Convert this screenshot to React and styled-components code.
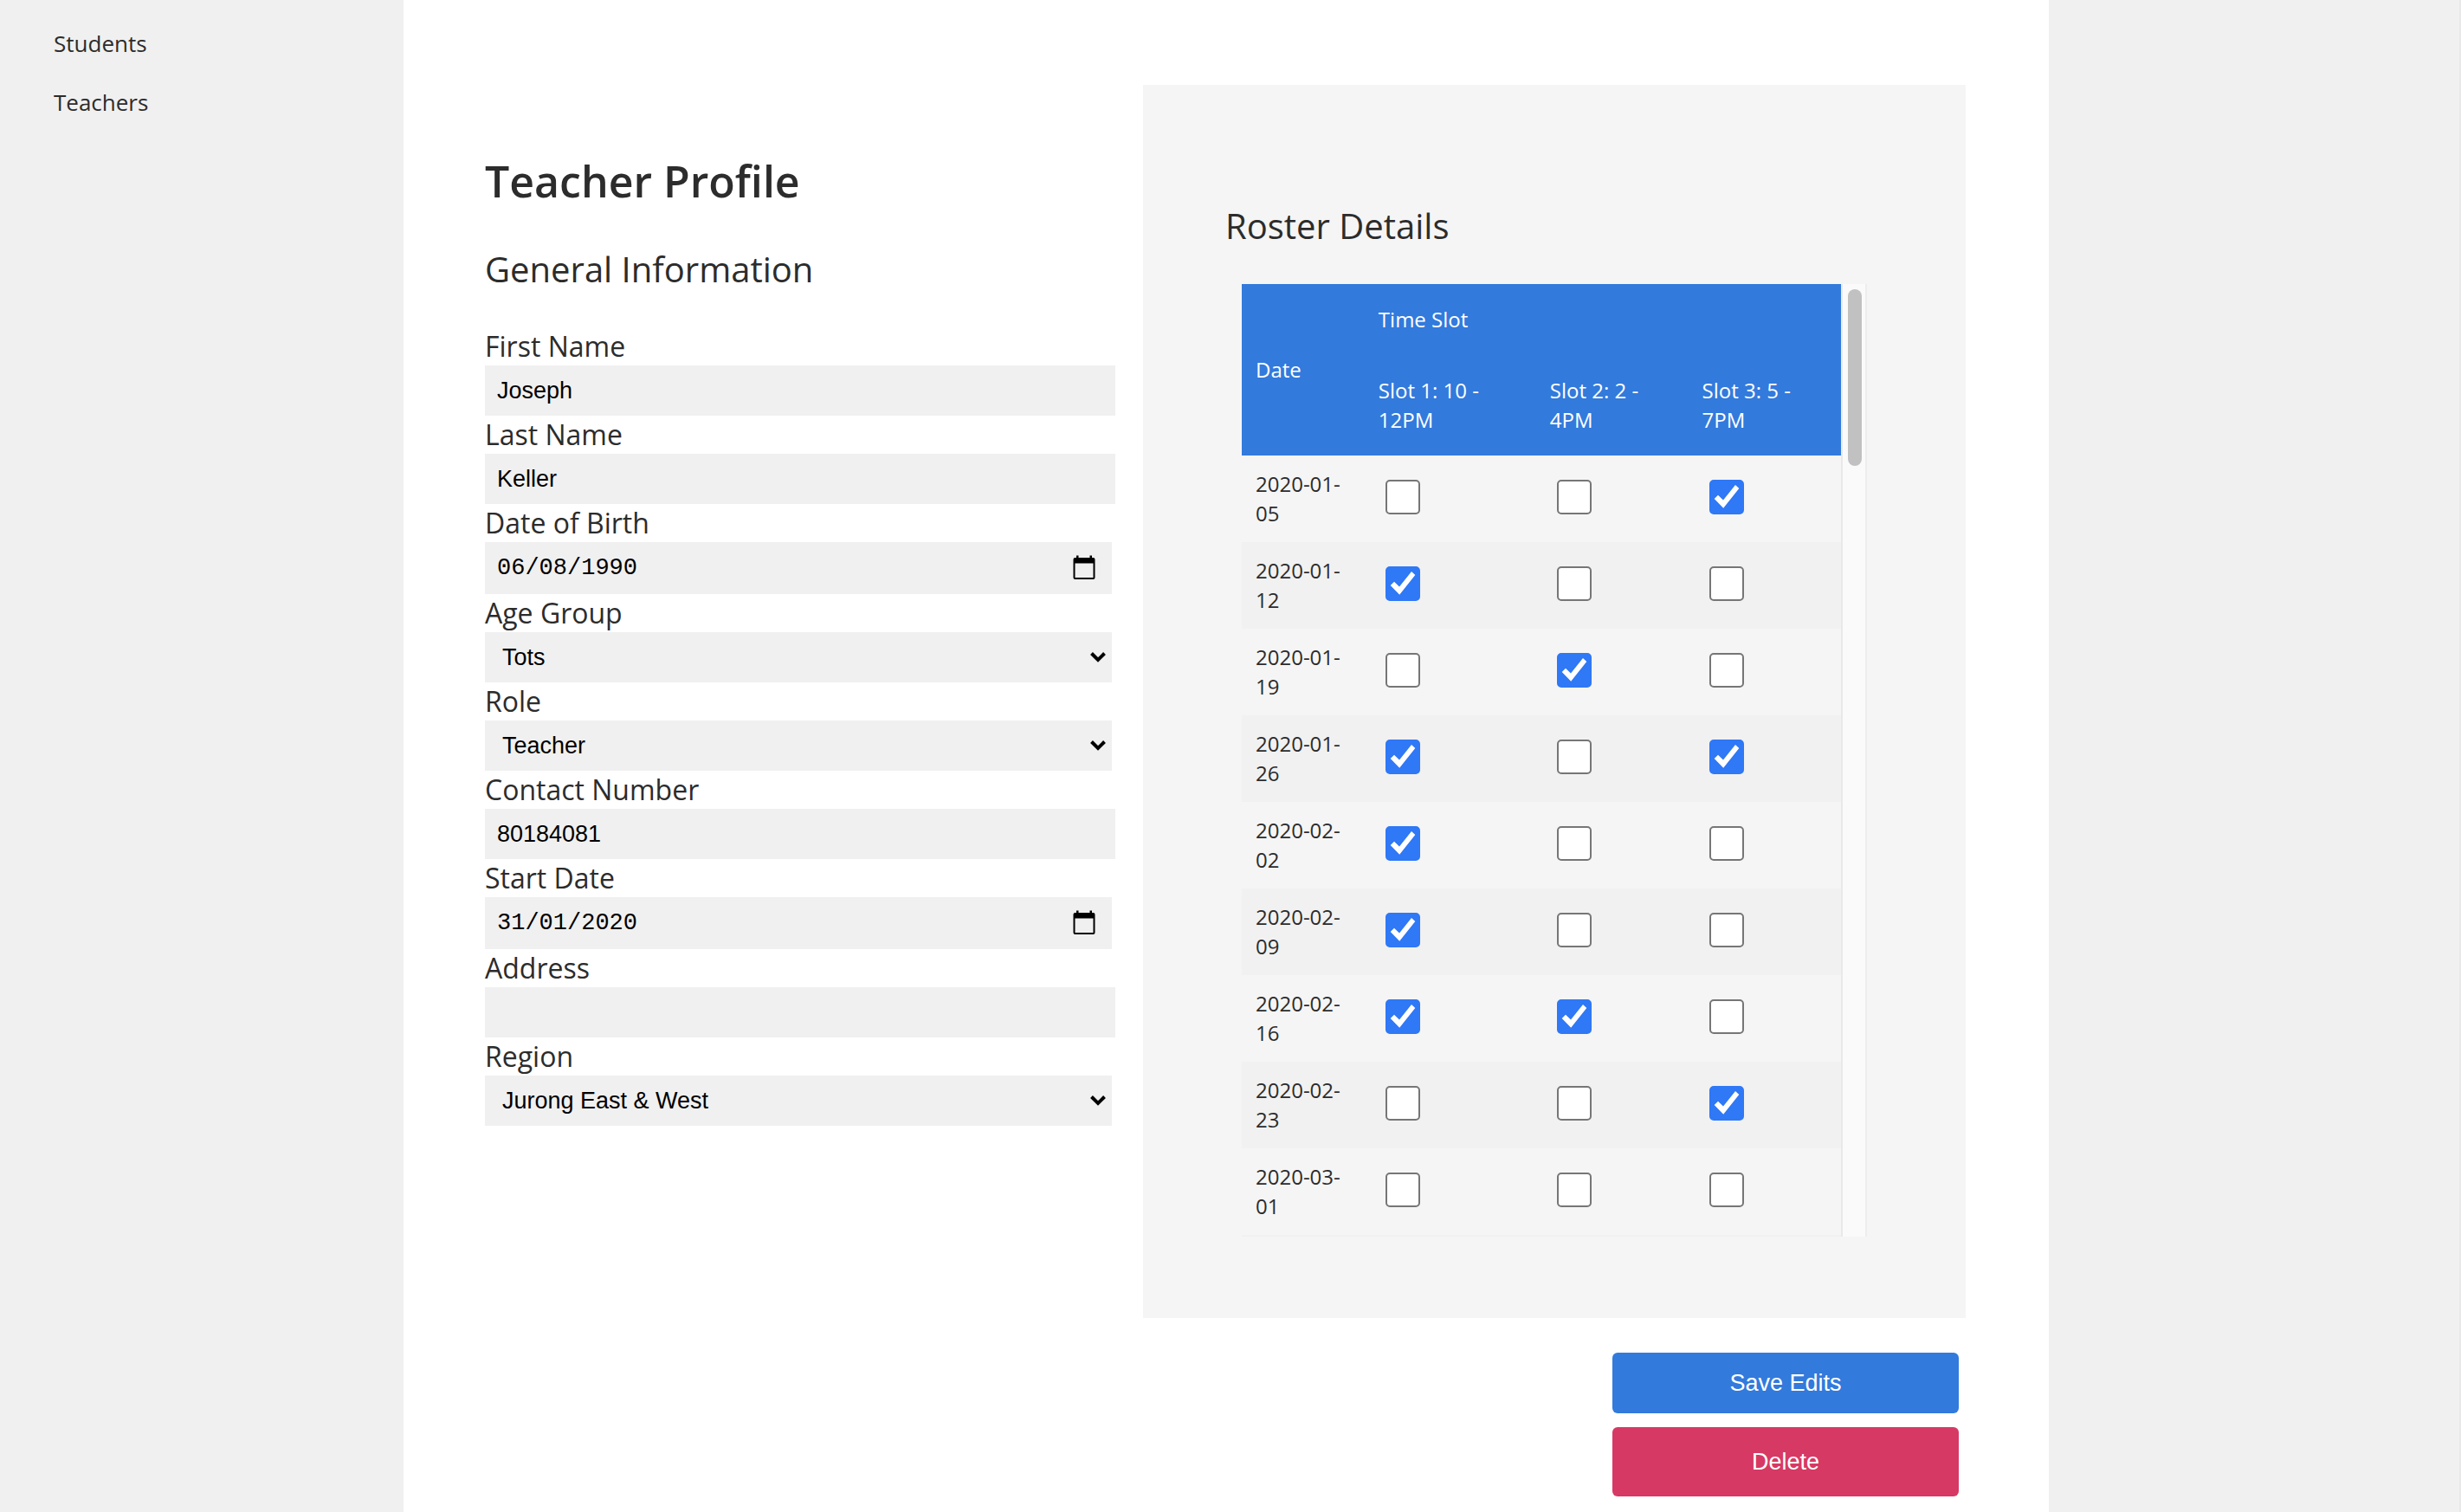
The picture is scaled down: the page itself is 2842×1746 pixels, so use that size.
import React, { useState } from "react";
import styled, { createGlobalStyle, css } from "styled-components";

const sans = `"Open Sans", "Noto Sans", sans-serif`;
const controlFont = `"Liberation Sans", Arial, sans-serif`;

const GlobalStyle = createGlobalStyle`
  *, *::before, *::after { box-sizing: border-box; }
  body {
    margin: 0;
    background: #f0f0f0;
    color: #2c2c2c;
    font-family: ${sans};
  }
  button, input, select { font: inherit; color: inherit; margin: 0; }
`;

const Layout = styled.div`
  display: grid;
  grid-template-columns: 466fr 1900fr 476fr;
  min-height: 100vh;
`;

const Sidebar = styled.nav`
  display: flex;
  flex-direction: column;
  padding: 16px 0 0 62px;
`;

const NavLink = styled.a`
  padding: 16px 0;
  font-size: 26px;
  line-height: 36px;
  color: #2c2c2c;
  text-decoration: none;
`;

const Gutter = styled.aside`
  border-right: 2px solid #e8e8e8;
`;

const Main = styled.main`
  background: #fff;
  padding: 98px 96px 0 94px;
`;

const Columns = styled.div`
  display: grid;
  grid-template-columns: 4fr 5fr;
`;

const ProfileForm = styled.form`
  padding: 76px 32px 0 0;
`;

const Title = styled.h1`
  margin: 0 0 39px;
  font-size: 50px;
  line-height: 70px;
  font-weight: 600;
`;

const SectionTitle = styled.h2`
  margin: 0 0 39px;
  font-size: 40px;
  line-height: 56px;
  font-weight: 400;
`;

const FieldLabel = styled.label`
  display: block;
  font-size: 32px;
  line-height: 44px;
`;

const fieldBox = css`
  display: block;
  width: 100%;
  height: 58px;
  border: 0;
  border-radius: 0;
  outline: 0;
  background: #f0f0f0;
  color: #000;
  font-family: ${controlFont};
  font-size: 27px;
`;

const TextInput = styled.input`
  ${fieldBox}
  padding: 0 14px;
`;

const Inset = styled.div`
  position: relative;
  margin-right: 4px;
`;

const DateInput = styled.input`
  ${fieldBox}
  height: 60px;
  padding: 0 64px 0 14px;
  font-family: "Liberation Mono", monospace;
`;

const SelectBox = styled.select`
  ${fieldBox}
  appearance: none;
  padding: 0 40px 0 20px;
`;

const PickerButton = styled.button`
  position: absolute;
  top: 0;
  right: 18px;
  display: flex;
  align-items: center;
  height: 100%;
  padding: 0;
  border: 0;
  background: none;
  color: #000;
`;

const Chevron = styled.svg`
  position: absolute;
  top: 23px;
  right: 7px;
  pointer-events: none;
`;

const Roster = styled.section`
  background: #f5f5f5;
  padding: 135px 95px 94px;
`;

const TableFrame = styled.div`
  display: flex;
  margin: 0 19px;
`;

const Table = styled.table`
  flex: 1;
  table-layout: fixed;
  border-collapse: collapse;
  font-size: 24px;
  line-height: 34px;
  text-align: left;
`;

const Col = styled.col`
  width: ${(p) => p.$share}%;
`;

const HeadCell = styled.th`
  padding: 24px 16px;
  background: #327adc;
  color: #fff;
  font-weight: 500;
`;

const Row = styled.tr`
  background: ${(p) => (p.$shaded ? "#f1f1f1" : "#f5f5f5")};
`;

const Foot = styled.tfoot`
  td {
    height: 2px;
    padding: 0;
    background: #f1f1f1;
  }
`;

const DateCell = styled.th`
  padding: 16px;
  font-weight: 400;
`;

const SlotCell = styled.td`
  padding: 0 24px 4px;
`;

const Tick = styled.span`
  display: grid;
  width: 40px;
  height: 40px;
  > * { grid-area: 1 / 1; }
`;

const Box = styled.input`
  appearance: none;
  width: 40px;
  height: 40px;
  border: 2px solid #767676;
  border-radius: 5px;
  background: #fff;
  &:checked {
    border-color: #2f78f6;
    background: #2f78f6;
  }
  & + svg { visibility: hidden; pointer-events: none; }
  &:checked + svg { visibility: visible; }
`;

const ScrollTrack = styled.div`
  flex: none;
  width: 30px;
  padding: 6px;
  border: solid #e8e8e8;
  border-width: 0 2px;
  border-right-color: #ededed;
  background: #fafafa;
`;

const ScrollThumb = styled.div`
  width: 16px;
  height: 204px;
  border-radius: 8px;
  background: #c1c1c1;
`;

const Actions = styled.div`
  display: flex;
  flex-direction: column;
  align-items: flex-end;
  gap: 16px;
  padding: 40px 8px 18px 0;
`;

const ActionButton = styled.button`
  width: 400px;
  height: ${(p) => (p.$danger ? 80 : 70)}px;
  border: 0;
  border-radius: 6px;
  background: ${(p) => (p.$danger ? "#d63964" : "#327adc")};
  color: #fff;
  font-family: ${controlFont};
  font-size: 27px;
`;

const fields = [
  { id: "firstName", label: "First Name", kind: "text", value: "Joseph" },
  { id: "lastName", label: "Last Name", kind: "text", value: "Keller" },
  { id: "dob", label: "Date of Birth", kind: "date", value: "06/08/1990" },
  { id: "ageGroup", label: "Age Group", kind: "select", value: "Tots" },
  { id: "role", label: "Role", kind: "select", value: "Teacher" },
  { id: "contact", label: "Contact Number", kind: "text", value: "80184081" },
  { id: "startDate", label: "Start Date", kind: "date", value: "31/01/2020" },
  { id: "address", label: "Address", kind: "text", value: "" },
  { id: "region", label: "Region", kind: "select", value: "Jurong East & West" },
];

const slots = ["Slot 1: 10 - 12PM", "Slot 2: 2 - 4PM", "Slot 3: 5 - 7PM"];

const roster = [
  ["2020-01-05", [0, 0, 1]],
  ["2020-01-12", [1, 0, 0]],
  ["2020-01-19", [0, 1, 0]],
  ["2020-01-26", [1, 0, 1]],
  ["2020-02-02", [1, 0, 0]],
  ["2020-02-09", [1, 0, 0]],
  ["2020-02-16", [1, 1, 0]],
  ["2020-02-23", [0, 0, 1]],
  ["2020-03-01", [0, 0, 0]],
];

function CalendarIcon() {
  return (
    <svg width="28" height="30" viewBox="0 0 28 30" aria-hidden="true">
      <path
        fill="currentColor"
        fillRule="evenodd"
        d="M5 0.500h2.500v2.500h13V0.500H23V3h1.500a2 2 0 0 1 2 2v21a2 2 0 0 1-2 2h-21a2 2 0 0 1-2-2V5a2 2 0 0 1 2-2H5zM3.500 9.500v16.500h21V9.500z"
      />
    </svg>
  );
}

function ChevronIcon() {
  return (
    <Chevron width="18" height="12" viewBox="0 0 18 12" aria-hidden="true">
      <path d="M1.500 1.500L9 9L16.500 1.500" fill="none" stroke="#000" strokeWidth="4" />
    </Chevron>
  );
}

function Field({ id, label, kind, value }) {
  return (
    <div>
      <FieldLabel htmlFor={id}>{label}</FieldLabel>
      {kind === "text" && <TextInput id={id} defaultValue={value} />}
      {kind === "date" && (
        <Inset>
          <DateInput id={id} defaultValue={value} />
          <PickerButton type="button">
            <CalendarIcon />
          </PickerButton>
        </Inset>
      )}
      {kind === "select" && (
        <Inset>
          <SelectBox id={id} defaultValue={value}>
            <option>{value}</option>
          </SelectBox>
          <ChevronIcon />
        </Inset>
      )}
    </div>
  );
}

function SlotCheckbox({ label, initial }) {
  const [checked, setChecked] = useState(Boolean(initial));
  return (
    <Tick>
      <Box
        type="checkbox"
        aria-label={label}
        checked={checked}
        onChange={(e) => setChecked(e.target.checked)}
      />
      <svg width="40" height="40" viewBox="0 0 40 40" aria-hidden="true">
        <path d="M5.700 22L10 17.700L16 23.600L30 6L34.300 10L16.200 32.700Z" fill="#fff" />
      </svg>
    </Tick>
  );
}

export default function App() {
  return (
    <>
      <GlobalStyle />
      <Layout>
        <Sidebar>
          <NavLink href="#students">Students</NavLink>
          <NavLink href="#teachers">Teachers</NavLink>
        </Sidebar>
        <Main>
          <Columns>
            <ProfileForm>
              <Title>Teacher Profile</Title>
              <SectionTitle>General Information</SectionTitle>
              {fields.map((f) => (
                <Field key={f.id} {...f} />
              ))}
            </ProfileForm>
            <Roster>
              <SectionTitle>Roster Details</SectionTitle>
              <TableFrame>
                <Table>
                  <colgroup>
                    <Col $share={20.5} />
                    <Col $share={28.6} />
                    <Col $share={25.4} />
                    <Col $share={25.5} />
                  </colgroup>
                  <thead>
                    <tr>
                      <HeadCell rowSpan={2}>Date</HeadCell>
                      <HeadCell colSpan={3}>Time Slot</HeadCell>
                    </tr>
                    <tr>
                      {slots.map((s) => (
                        <HeadCell key={s}>{s}</HeadCell>
                      ))}
                    </tr>
                  </thead>
                  <tbody>
                    {roster.map(([date, marks], i) => (
                      <Row key={date} $shaded={i % 2 === 1}>
                        <DateCell scope="row">{date}</DateCell>
                        {marks.map((m, j) => (
                          <SlotCell key={slots[j]}>
                            <SlotCheckbox label={`${date} ${slots[j]}`} initial={m} />
                          </SlotCell>
                        ))}
                      </Row>
                    ))}
                  </tbody>
                  <Foot>
                    <tr>
                      <td colSpan={4} />
                    </tr>
                  </Foot>
                </Table>
                <ScrollTrack>
                  <ScrollThumb />
                </ScrollTrack>
              </TableFrame>
            </Roster>
          </Columns>
          <Actions>
            <ActionButton type="button">Save Edits</ActionButton>
            <ActionButton type="button" $danger>
              Delete
            </ActionButton>
          </Actions>
        </Main>
        <Gutter />
      </Layout>
    </>
  );
}
